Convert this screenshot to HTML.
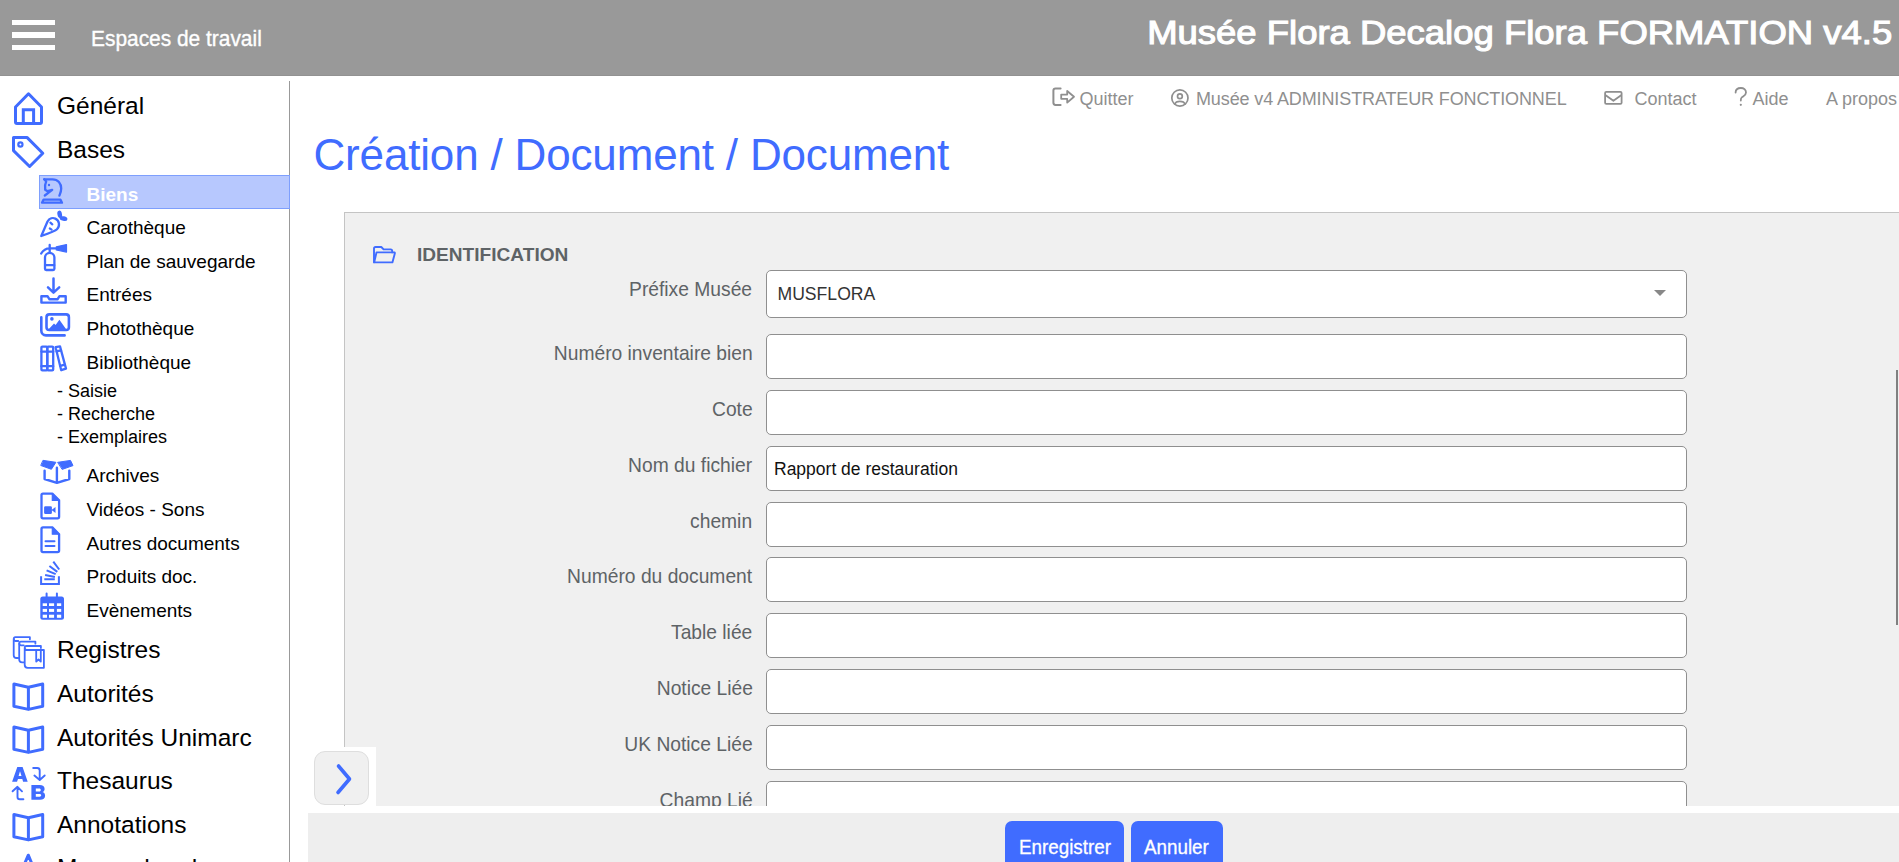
<!DOCTYPE html>
<html><head><meta charset="utf-8"><style>
*{margin:0;padding:0;box-sizing:border-box}
html,body{width:1899px;height:862px;overflow:hidden;background:#fff;font-family:"Liberation Sans",sans-serif}
.t{position:absolute;white-space:nowrap}
.a{position:absolute}
.inp{position:absolute;left:766px;width:921px;background:#fff;border:1px solid #8f8f8f;border-radius:5px}
</style></head><body>
<div class="a" style="left:0;top:0;width:1899px;height:76px;background:#999;border-bottom:1px solid #929292"></div>
<div class="a" style="left:12px;top:19.8px;width:43px;height:5.4px;background:#fff"></div>
<div class="a" style="left:12px;top:32px;width:43px;height:5.9px;background:#fff"></div>
<div class="a" style="left:12px;top:44.6px;width:43px;height:5.5px;background:#fff"></div>
<div class="t" style="left:90.5px;top:27.90px;font-size:22px;line-height:22px;color:#fff;font-weight:normal;transform:scaleX(0.95);transform-origin:0 50%;-webkit-text-stroke:0.35px #fff;">Espaces de travail</div>
<div class="t" style="right:6.5px;top:15.95px;font-size:33px;line-height:33px;color:#fff;font-weight:normal;transform:scaleX(1.105);transform-origin:100% 50%;-webkit-text-stroke:1.1px #fff;">Musée Flora Decalog Flora FORMATION v4.5</div>
<div class="a" style="left:289px;top:81px;width:1px;height:781px;background:#999"></div>
<div class="t" style="left:1079.5px;top:89.70px;font-size:18px;line-height:18px;color:#8f8f8f;font-weight:normal;">Quitter</div>
<div class="t" style="left:1196px;top:89.70px;font-size:18px;line-height:18px;color:#8f8f8f;font-weight:normal;letter-spacing:-0.12px;">Musée v4 ADMINISTRATEUR FONCTIONNEL</div>
<div class="t" style="left:1634.5px;top:89.70px;font-size:18px;line-height:18px;color:#8f8f8f;font-weight:normal;">Contact</div>
<div class="t" style="left:1752.5px;top:89.70px;font-size:18px;line-height:18px;color:#8f8f8f;font-weight:normal;">Aide</div>
<div class="t" style="left:1826px;top:89.70px;font-size:18px;line-height:18px;color:#8f8f8f;font-weight:normal;">A propos</div>
<svg class="a" style="left:1040px;top:80px" width="859" height="40" fill="none" stroke="#8f8f8f" stroke-width="1.8" stroke-linecap="round" stroke-linejoin="round">
<g transform="translate(-1040,-80)">
<path d="M1060.6,88.5 H1055.5 Q1053.4,88.5 1053.4,90.6 V102.8 Q1053.4,104.9 1055.5,104.9 H1060.6" stroke-width="2"/>
<path d="M1061.2,94.6 H1067.2 V91 L1074,96.7 L1067.2,102.6 V98.8 H1061.2 Z"/>
<circle cx="1179.9" cy="98" r="8.1" stroke-width="1.7"/>
<circle cx="1179.9" cy="96.2" r="2.4" stroke-width="1.7"/>
<path d="M1174.8,104.2 C1175.5,102 1177.5,101.3 1179.9,101.3 C1182.3,101.3 1184.3,102 1185,104.2" stroke-width="1.7"/>
<rect x="1605.1" y="91.9" width="16.5" height="12" rx="1.2"/>
<path d="M1606,95.5 L1613.4,100.8 L1620.8,95.5"/>
<path d="M1735.6,92.6 C1735.6,89.5 1738,88 1740.9,88 C1743.8,88 1746,89.7 1746,92.4 C1746,95.3 1743.5,96 1741.8,97.4 C1740.9,98.1 1740.8,99 1740.8,100.5"/>
<circle cx="1740.8" cy="104.8" r="1.1" fill="#8f8f8f" stroke="none"/>
</g></svg>
<div class="t" style="left:313.5px;top:132.60px;font-size:44px;line-height:44px;color:#406cff;font-weight:normal;letter-spacing:-0.17px;">Création / Document / Document</div>
<div class="a" style="left:344px;top:212px;width:1560px;height:594px;background:#f0f0f0;border:1px solid #c4c4c4;border-bottom:none"></div>
<div class="t" style="left:417px;top:244.76px;font-size:19.1px;line-height:19.1px;color:#5e6366;font-weight:bold;">IDENTIFICATION</div>
<svg class="a" style="left:366px;top:238px" width="36" height="32" fill="none" stroke="#406cff" stroke-width="1.9" stroke-linecap="round" stroke-linejoin="round"><g transform="translate(-366,-238)">
<path d="M374,262.3 V248.6 Q374,247 375.6,247 H381.3 L383.6,249.4 H390.6 Q392.2,249.4 392.2,251 V252.4"/>
<path d="M374.2,262.4 L376.5,252.4 H394.5 Q395,252.6 394.8,253.6 L392.4,262.4 Z"/>
</g></svg>
<div class="inp" style="top:270px;height:48px"></div>
<div class="t" style="left:777.5px;top:286.04px;font-size:17.6px;line-height:17.6px;color:#333;font-weight:normal;">MUSFLORA</div>
<div class="a" style="left:1654px;top:290px;width:0;height:0;border-left:6px solid transparent;border-right:6px solid transparent;border-top:6px solid #888"></div>
<div class="t" style="right:1146.5px;top:278.83px;font-size:20.2px;line-height:20.2px;color:#5e6366;font-weight:normal;transform:scaleX(0.953);transform-origin:100% 50%;">Préfixe Musée</div>
<div class="inp" style="top:334px;height:45px"></div>
<div class="t" style="right:1146.5px;top:342.83px;font-size:20.2px;line-height:20.2px;color:#5e6366;font-weight:normal;transform:scaleX(0.953);transform-origin:100% 50%;">Numéro inventaire bien</div>
<div class="inp" style="top:390px;height:45px"></div>
<div class="t" style="right:1146.5px;top:398.83px;font-size:20.2px;line-height:20.2px;color:#5e6366;font-weight:normal;transform:scaleX(0.953);transform-origin:100% 50%;">Cote</div>
<div class="inp" style="top:446px;height:45px"></div>
<div class="t" style="right:1146.5px;top:454.83px;font-size:20.2px;line-height:20.2px;color:#5e6366;font-weight:normal;transform:scaleX(0.953);transform-origin:100% 50%;">Nom du fichier</div>
<div class="inp" style="top:502px;height:45px"></div>
<div class="t" style="right:1146.5px;top:510.83px;font-size:20.2px;line-height:20.2px;color:#5e6366;font-weight:normal;transform:scaleX(0.953);transform-origin:100% 50%;">chemin</div>
<div class="inp" style="top:557px;height:45px"></div>
<div class="t" style="right:1146.5px;top:565.83px;font-size:20.2px;line-height:20.2px;color:#5e6366;font-weight:normal;transform:scaleX(0.953);transform-origin:100% 50%;">Numéro du document</div>
<div class="inp" style="top:613px;height:45px"></div>
<div class="t" style="right:1146.5px;top:621.83px;font-size:20.2px;line-height:20.2px;color:#5e6366;font-weight:normal;transform:scaleX(0.953);transform-origin:100% 50%;">Table liée</div>
<div class="inp" style="top:669px;height:45px"></div>
<div class="t" style="right:1146.5px;top:677.83px;font-size:20.2px;line-height:20.2px;color:#5e6366;font-weight:normal;transform:scaleX(0.953);transform-origin:100% 50%;">Notice Liée</div>
<div class="inp" style="top:725px;height:45px"></div>
<div class="t" style="right:1146.5px;top:733.83px;font-size:20.2px;line-height:20.2px;color:#5e6366;font-weight:normal;transform:scaleX(0.953);transform-origin:100% 50%;">UK Notice Liée</div>
<div class="inp" style="top:781px;height:45px"></div>
<div class="t" style="right:1146.5px;top:789.83px;font-size:20.2px;line-height:20.2px;color:#5e6366;font-weight:normal;transform:scaleX(0.953);transform-origin:100% 50%;">Champ Lié</div>
<div class="t" style="left:774px;top:460.62px;font-size:17.5px;line-height:17.5px;color:#111;font-weight:normal;">Rapport de restauration</div>
<div class="a" style="left:290px;top:806px;width:1609px;height:7px;background:#fff"></div>
<div class="a" style="left:1896px;top:370px;width:2px;height:255px;background:#808080"></div>
<div class="a" style="left:312px;top:747px;width:64px;height:59px;background:#fff"></div>
<div class="a" style="left:314px;top:751px;width:55px;height:54px;background:#f0f0f0;border:1px solid #dedede;border-radius:11px"></div>
<svg class="a" style="left:0;top:0" width="400" height="862"><path d="M338.5,766 L349.5,779 L338,792.5" fill="none" stroke="#406cff" stroke-width="3.6" stroke-linecap="round" stroke-linejoin="round"/></svg>
<div class="a" style="left:344px;top:805px;width:1px;height:1px;background:#c4c4c4"></div>
<div class="a" style="left:308px;top:813px;width:1591px;height:49px;background:#eee"></div>
<div class="a" style="left:1005px;top:821px;width:119px;height:50px;background:#406cff;border-radius:7px"></div>
<div class="a" style="left:1131px;top:821px;width:92px;height:50px;background:#406cff;border-radius:7px"></div>
<div class="t" style="left:1018.5px;top:837.30px;font-size:20px;line-height:20px;color:#fff;font-weight:normal;transform:scaleX(0.94);transform-origin:0 50%;-webkit-text-stroke:0.3px #fff;">Enregistrer</div>
<div class="t" style="left:1143.5px;top:837.30px;font-size:20px;line-height:20px;color:#fff;font-weight:normal;transform:scaleX(0.94);transform-origin:0 50%;-webkit-text-stroke:0.3px #fff;">Annuler</div>
<div class="a" style="left:39px;top:175px;width:251px;height:34px;background:#b7c8fe;border:1px solid #7e9ffd"></div>
<div class="t" style="left:57px;top:94.17px;font-size:24.5px;line-height:24.5px;color:#000;font-weight:normal;">Général</div>
<div class="t" style="left:57px;top:138.18px;font-size:24.5px;line-height:24.5px;color:#000;font-weight:normal;">Bases</div>
<div class="t" style="left:57px;top:638.17px;font-size:24.5px;line-height:24.5px;color:#000;font-weight:normal;">Registres</div>
<div class="t" style="left:57px;top:682.17px;font-size:24.5px;line-height:24.5px;color:#000;font-weight:normal;">Autorités</div>
<div class="t" style="left:57px;top:725.67px;font-size:24.5px;line-height:24.5px;color:#000;font-weight:normal;">Autorités Unimarc</div>
<div class="t" style="left:57px;top:769.17px;font-size:24.5px;line-height:24.5px;color:#000;font-weight:normal;">Thesaurus</div>
<div class="t" style="left:57px;top:812.67px;font-size:24.5px;line-height:24.5px;color:#000;font-weight:normal;">Annotations</div>
<div class="t" style="left:57px;top:856.17px;font-size:24.5px;line-height:24.5px;color:#000;font-weight:normal;">Mes recherches</div>
<div class="t" style="left:86.5px;top:184.85px;font-size:19px;line-height:19px;color:#fff;font-weight:bold;">Biens</div>
<div class="t" style="left:86.5px;top:217.85px;font-size:19px;line-height:19px;color:#000;font-weight:normal;">Carothèque</div>
<div class="t" style="left:86.5px;top:251.85px;font-size:19px;line-height:19px;color:#000;font-weight:normal;">Plan de sauvegarde</div>
<div class="t" style="left:86.5px;top:285.35px;font-size:19px;line-height:19px;color:#000;font-weight:normal;">Entrées</div>
<div class="t" style="left:86.5px;top:318.85px;font-size:19px;line-height:19px;color:#000;font-weight:normal;">Photothèque</div>
<div class="t" style="left:86.5px;top:352.85px;font-size:19px;line-height:19px;color:#000;font-weight:normal;">Bibliothèque</div>
<div class="t" style="left:86.5px;top:465.85px;font-size:19px;line-height:19px;color:#000;font-weight:normal;">Archives</div>
<div class="t" style="left:86.5px;top:499.85px;font-size:19px;line-height:19px;color:#000;font-weight:normal;">Vidéos - Sons</div>
<div class="t" style="left:86.5px;top:533.85px;font-size:19px;line-height:19px;color:#000;font-weight:normal;">Autres documents</div>
<div class="t" style="left:86.5px;top:567.35px;font-size:19px;line-height:19px;color:#000;font-weight:normal;">Produits doc.</div>
<div class="t" style="left:86.5px;top:600.85px;font-size:19px;line-height:19px;color:#000;font-weight:normal;">Evènements</div>
<div class="t" style="left:57px;top:381.70px;font-size:18px;line-height:18px;color:#000;font-weight:normal;">- Saisie</div>
<div class="t" style="left:57px;top:404.70px;font-size:18px;line-height:18px;color:#000;font-weight:normal;">- Recherche</div>
<div class="t" style="left:57px;top:427.70px;font-size:18px;line-height:18px;color:#000;font-weight:normal;">- Exemplaires</div>
<svg class="a" style="left:0;top:0" width="290" height="862" fill="none" stroke="#406cff" stroke-linecap="round" stroke-linejoin="round">
<!-- home -->
<path d="M15.5,107 L28.5,93.8 L41.5,107 V122 Q41.5,123.5 40,123.5 H17 Q15.5,123.5 15.5,122 Z" stroke-width="3"/>
<path d="M23.3,123 V109.8 H33.6 V123" stroke-width="3" stroke-linejoin="miter" stroke-linecap="butt"/>
<!-- tag -->
<path d="M13.5,137.6 H27.2 L42.8,153.3 L29.6,166.5 L13.5,150.6 Z" stroke-width="3"/>
<circle cx="20.4" cy="144.5" r="2.1" stroke-width="2.2"/>
<!-- knight -->
<path d="M44.2,179.3 H52.5 C58,179.3 61.2,183.5 61.2,188.5 C61.2,191.5 60.2,193.5 59.4,195.6" stroke-width="2.3"/>
<path d="M44.2,179.3 L46.2,181.5 C44.9,184 44.7,187 45.2,189.8 L47.5,191.2 L52.2,189.9 L44.8,195.5" stroke-width="2.3"/>
<circle cx="49" cy="185" r="1.2" fill="#406cff" stroke="none"/>
<path d="M43.6,199.6 H60.4 L62,202.7 H42 Z" stroke-width="2.3"/>
<!-- carrot -->
<path d="M41.3,236 L47.5,221.5 C49.5,218 53,217.5 55.3,218.6 C59.5,220.5 60.2,226 57,229.2 C55.2,231 41.3,236 41.3,236 Z" stroke-width="2.3"/>
<path d="M50.4,222.7 L52.3,224.3 M49.8,228.5 L51.6,229.6" stroke-width="2.2"/>
<ellipse cx="59.7" cy="214.4" rx="2.3" ry="3.8" transform="rotate(-12 59.6 214.3)" fill="#406cff" stroke="none"/>
<ellipse cx="63.6" cy="218.6" rx="3.9" ry="2.3" transform="rotate(12 63.5 218.4)" fill="#406cff" stroke="none"/>
<!-- extinguisher -->
<path d="M45,268.8 V257.6 A4.7,4.7 0 0 1 54.4,257.6 V268.8 Q54.4,270 53.2,270 H46.2 Q45,270 45,268.8 Z" stroke-width="2.3"/>
<path d="M45.2,265.2 H54.2 M49.7,245 V252.5 M41.2,253.5 C43,250.5 45.8,248.4 49.7,248.4 H56.5" stroke-width="2.3"/>
<path d="M56.3,246.8 L66.5,244.6 V252.1 L56.3,250 Z" fill="#406cff" stroke-width="1.2"/>
<!-- download tray -->
<path d="M53.5,278.5 V292 M48,287.3 L53.5,292.7 L59.2,287.3" stroke-width="2.5"/>
<path d="M41.4,296.2 H47.5 L49.5,299.3 H57.5 L59.5,296.2 H65.7 V302.6 H41.4 Z" stroke-width="2.4"/>
<!-- photos -->
<rect x="46.5" y="314.4" width="22.4" height="15.6" rx="2.8" stroke-width="2.6"/>
<circle cx="51.9" cy="318.9" r="1.8" fill="#406cff" stroke="none"/>
<path d="M48.2,329.8 L54,323.6 L55.6,325 L59.4,319.8 L66.5,329.8 Z" fill="#406cff" stroke="none"/>
<path d="M41.3,317.2 V330.5 C41.3,333.2 43.2,335.4 46,335.4 H64.6" stroke-width="2.6"/>
<!-- books -->
<rect x="41.4" y="346.6" width="5.9" height="23.8" rx="1" stroke-width="2.3"/>
<rect x="47.3" y="346.6" width="5.9" height="23.8" rx="1" stroke-width="2.3"/>
<path d="M41.4,351.6 H53.2 M41.4,366.2 H53.2" stroke-width="2.3"/>
<path d="M55.6,347.2 L60,346.4 L66,368.6 L61.2,370.2 Z" stroke-width="2.3"/>
<path d="M56.6,351.4 L61,350.4 M60.2,365.9 L64.8,364.6" stroke-width="2.3"/>
<!-- archives box -->
<path d="M43.3,460.4 L55.9,462.3 L51.4,469.3 L41.1,465.6 Z" fill="#406cff" stroke-width="1"/>
<path d="M58,462.3 L70.5,460.4 L73,465.6 L62.5,469.3 Z" fill="#406cff" stroke-width="1"/>
<path d="M56.9,467.7 V482.5 M44.6,470.6 V479 L56.9,482.8 L69.3,479 V470.6" stroke-width="2.4"/>
<!-- file video -->
<path d="M52.3,493.6 H43 Q41.5,493.6 41.5,495.1 V516.8 Q41.5,518.3 43,518.3 H57.6 Q59.1,518.3 59.1,516.8 V500.4 Z" stroke-width="2.3"/>
<path d="M52.3,493.6 V500.4 H59.1 Z" fill="#406cff" stroke-width="1.2"/>
<rect x="44.1" y="506.3" width="7.8" height="7.7" rx="1.3" fill="#406cff" stroke="none"/>
<path d="M51.5,510 L55.5,507 V513 Z" fill="#406cff" stroke="none"/>
<!-- file text -->
<path d="M52.3,527.4 H43 Q41.5,527.4 41.5,528.9 V550.6 Q41.5,552.1 43,552.1 H57.6 Q59.1,552.1 59.1,550.6 V534.2 Z" stroke-width="2.3"/>
<path d="M52.3,527.4 V534.2 H59.1 Z" fill="#406cff" stroke-width="1.2"/>
<path d="M45.5,541.3 H54.5 M45.5,546.1 H54.5" stroke-width="2" />
<!-- stack overflow -->
<path d="M41.1,576.2 V584 H58.9 V576.2" stroke-width="2" stroke-linecap="butt" stroke-linejoin="miter"/>
<path d="M44.3,579.3 H54.8 M45.1,575 L54.9,577 M46.6,570.3 L55.7,574.2 M49.4,566 L57.3,571.9 M53.3,561.6 L59.2,569.5" stroke-width="2" stroke-linecap="butt"/>
<!-- calendar -->
<rect x="40.3" y="596.6" width="23.7" height="23.2" rx="2.5" fill="#406cff" stroke="none"/>
<path d="M46.6,593.6 V597 M56.9,593.6 V597" stroke-width="2"/>
<g fill="#fff" stroke="none">
<rect x="42.7" y="603.3" width="4.3" height="2.7"/><rect x="49" y="603.3" width="5.1" height="2.7"/><rect x="56.9" y="603.3" width="4.3" height="2.7"/>
<rect x="42.7" y="608.9" width="4.3" height="3"/><rect x="49" y="608.9" width="5.1" height="3"/><rect x="56.9" y="608.9" width="4.3" height="3"/>
<rect x="42.7" y="614.7" width="4.3" height="3.1"/><rect x="49" y="614.7" width="5.1" height="3.1"/><rect x="56.9" y="614.7" width="4.3" height="3.1"/>
</g>
<!-- registres -->
<g stroke-width="1.8">
<path d="M29.9,639.3 V637.2 H15.4 Q13.7,637.2 13.7,639.2 V655.2 Q13.7,658 16.6,658 H18.3"/>
<path d="M13.9,639.2 Q13.9,641 15.6,641 H18.3"/>
<path d="M35.4,643.7 V641.6 H20.9 Q19.2,641.6 19.2,643.6 V659.6 Q19.2,662.4 22.1,662.4 H23.8"/>
<path d="M19.4,643.6 Q19.4,645.4 21.1,645.4 H23.8"/>
<path d="M40.9,648.1 V646 H26.4 Q24.7,646 24.7,648 V664.8 Q24.7,667.8 27.6,667.8 H43.9 V650 H26.6 Q24.9,650 24.9,648"/>
<path d="M36.2,650.3 V661.6 L38.5,659.5 L40.8,661.6 V650.3"/>
</g>
<!-- book open x3 -->
<path id="bk" d="M13.9,684 L28.4,687.3 L42.7,684 V706.2 L28.4,709.4 L13.9,706.2 Z M28.4,687.3 V709" stroke-width="3"/>
<use href="#bk" y="43"/>
<use href="#bk" y="130.5"/>
<!-- sort alpha -->
<path fill-rule="evenodd" fill="#406cff" stroke="none" d="M12.1,781.7 L17.3,767.1 H22.6 L27.7,781.7 H23.1 L22.3,779 H18 L17,781.7 Z M18.6,776 H21.5 L20,771.3 Z"/>
<path fill-rule="evenodd" fill="#406cff" stroke="none" d="M31.4,785.1 H39.6 C42.9,785.1 44.6,786.7 44.6,788.9 C44.6,790.5 43.7,791.5 42.5,792 C44.2,792.5 45.1,793.9 45.1,795.8 C45.1,798.3 43.2,799.8 40.1,799.8 H31.4 Z M35.8,788.5 V791.5 H39.2 C40.2,791.5 40.8,790.9 40.8,790 C40.8,789.1 40.2,788.5 39.2,788.5 Z M35.8,793.9 V796.8 H39.5 C40.6,796.8 41.2,796.2 41.2,795.35 C41.2,794.5 40.6,793.9 39.5,793.9 Z"/>
<path d="M33.2,768 H37.2 Q39.7,768 39.7,770.5 V779.5 M34.4,775.5 L39.7,780 L44.7,775.5" stroke-width="1.9"/>
<path d="M23.4,799.3 H19.8 Q17.5,799.3 17.5,797 V787.2 M12.6,791.3 L17.5,786.8 L22,791.3" stroke-width="1.9"/>
<!-- partial icon -->
<path d="M24.5,864 L28.3,855.2 L32,864" stroke-width="3"/>
</svg>
</body></html>
